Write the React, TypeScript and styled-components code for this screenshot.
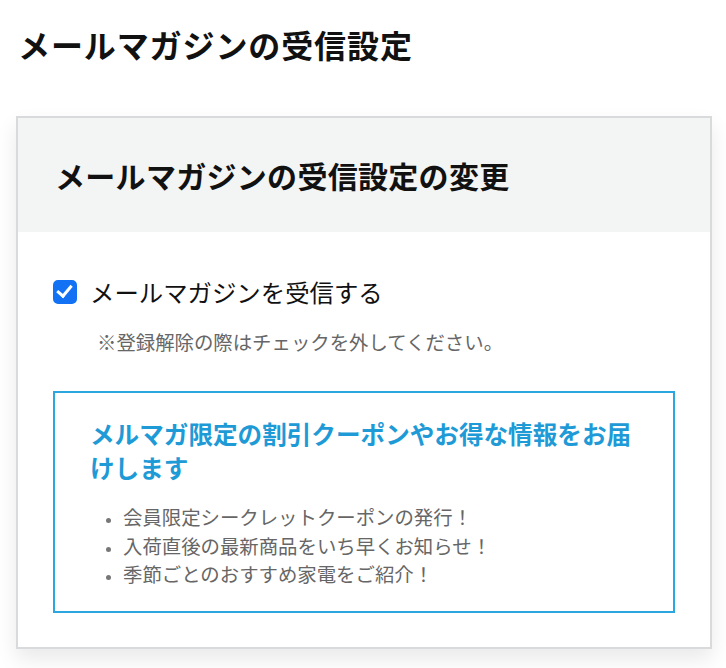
import React, { useState } from 'react';
import styled, { createGlobalStyle } from 'styled-components';

const GlobalStyle = createGlobalStyle`
  body {
    margin: 0;
    background: #fff;
    font-family: "Noto Sans CJK JP", "Noto Sans", sans-serif;
    color: #111;
  }
`;

const Page = styled.div`
  padding-bottom: 20px;
`;

const PageTitle = styled.h1`
  margin: 0;
  padding: 22px 18px 0;
  font-size: 32px;
  line-height: 44px;
  font-weight: 700;
  letter-spacing: 0.9px;
`;

const Card = styled.section`
  margin: 50px 14px 0 16px;
  border: 2px solid #d9dadc;
  background: #fff;
  box-shadow: 0 10px 20px rgba(0, 0, 0, 0.09);
`;

const CardHeader = styled.div`
  background: #f3f4f4;
  padding: 37px 37px;
`;

const CardTitle = styled.h2`
  margin: 0;
  font-size: 30px;
  line-height: 40px;
  font-weight: 700;
  letter-spacing: 0.3px;
`;

const CardBody = styled.div`
  padding: 42px 35px 34px;
`;

const CheckRow = styled.label`
  display: flex;
  align-items: center;
  gap: 13px;
  font-size: 24.4px;
  line-height: 36px;
  cursor: pointer;
`;

const CheckBox = styled.input`
  appearance: none;
  margin: 0;
  width: 24px;
  height: 24px;
  border-radius: 5px;
  border: 2px solid #8a8a8a;
  position: relative;
  flex-shrink: 0;

  &:checked {
    background: #1372f4;
    border-color: #1372f4;
  }

  &:checked::after {
    content: '';
    position: absolute;
    left: 5px;
    top: 0px;
    width: 6px;
    height: 12px;
    border: solid #fff;
    border-width: 0 3.5px 3.5px 0;
    transform: rotate(40deg);
  }
`;

const Note = styled.p`
  margin: 18px 0 0 44px;
  font-size: 19.4px;
  line-height: 28px;
  color: #666;
`;

const InfoBox = styled.div`
  margin-top: 35px;
  border: 2px solid #2ba6de;
  padding: 23px 30px 22px 35px;
`;

const InfoTitle = styled.h3`
  margin: 0;
  font-size: 24.6px;
  line-height: 34px;
  font-weight: 700;
  color: #1e9ad6;
`;

const InfoList = styled.ul`
  margin: 19px 0 0;
  padding-left: 33px;
  color: #666;
  font-size: 19.4px;
  line-height: 28.5px;

  li::marker {
    color: #777;
    font-size: 14px;
  }
`;

const perks = [
  '会員限定シークレットクーポンの発行！',
  '入荷直後の最新商品をいち早くお知らせ！',
  '季節ごとのおすすめ家電をご紹介！',
];

export default function App() {
  const [subscribed, setSubscribed] = useState(true);

  return (
    <>
      <GlobalStyle />
      <Page>
        <PageTitle>メールマガジンの受信設定</PageTitle>
        <Card>
          <CardHeader>
            <CardTitle>メールマガジンの受信設定の変更</CardTitle>
          </CardHeader>
          <CardBody>
            <CheckRow>
              <CheckBox
                type="checkbox"
                checked={subscribed}
                onChange={(e) => setSubscribed(e.target.checked)}
              />
              メールマガジンを受信する
            </CheckRow>
            <Note>※登録解除の際はチェックを外してください。</Note>
            <InfoBox>
              <InfoTitle>メルマガ限定の割引クーポンやお得な情報をお届けします</InfoTitle>
              <InfoList>
                {perks.map((p) => (
                  <li key={p}>{p}</li>
                ))}
              </InfoList>
            </InfoBox>
          </CardBody>
        </Card>
      </Page>
    </>
  );
}
